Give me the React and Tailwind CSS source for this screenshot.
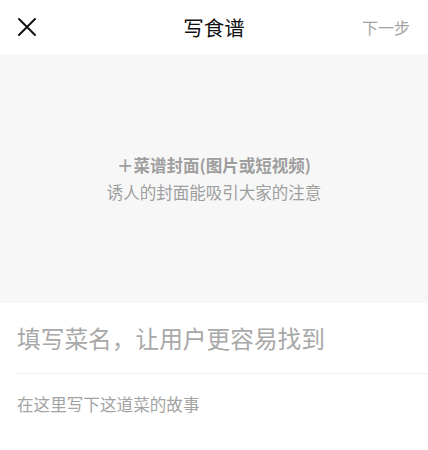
export default function App() {
  return (
    <div
      className="w-[428px] h-[450px] bg-white overflow-hidden"
      style={{ fontFamily: '"Noto Sans CJK SC", "Noto Sans", sans-serif' }}
    >
      {/* header */}
      <div className="h-[54px] flex items-center justify-between px-4 relative">
        <svg width="20" height="20" viewBox="0 0 20 20" className="ml-[1px]">
          <path d="M2 2L18 18M18 2L2 18" stroke="#111" strokeWidth="2" strokeLinecap="round" />
        </svg>
        <h1 className="absolute left-1/2 -translate-x-1/2 text-[20.5px] text-[#111] font-normal">写食谱</h1>
        <span className="text-[16px] text-[#a3a3a3] mr-[2px]">下一步</span>
      </div>

      {/* cover */}
      <div className="h-[249px] bg-[#f7f7f7] flex flex-col items-center justify-center">
        <p className="text-[16.5px] font-bold text-[#9e9e9e] leading-[27px]">＋菜谱封面(图片或短视频)</p>
        <p className="text-[16.5px] text-[#9e9e9e] leading-[27px]">诱人的封面能吸引大家的注意</p>
      </div>

      {/* name */}
      <div className="pl-[17px]">
        <div className="h-[71px] flex items-center border-b border-[#f0f0f0] pt-[2px]">
          <span className="text-[23.7px] text-[#a8a8a8]">填写菜名，让用户更容易找到</span>
        </div>
        <div className="pt-[18px]">
          <span className="text-[16.6px] text-[#a3a3a3]">在这里写下这道菜的故事</span>
        </div>
      </div>
    </div>
  );
}
